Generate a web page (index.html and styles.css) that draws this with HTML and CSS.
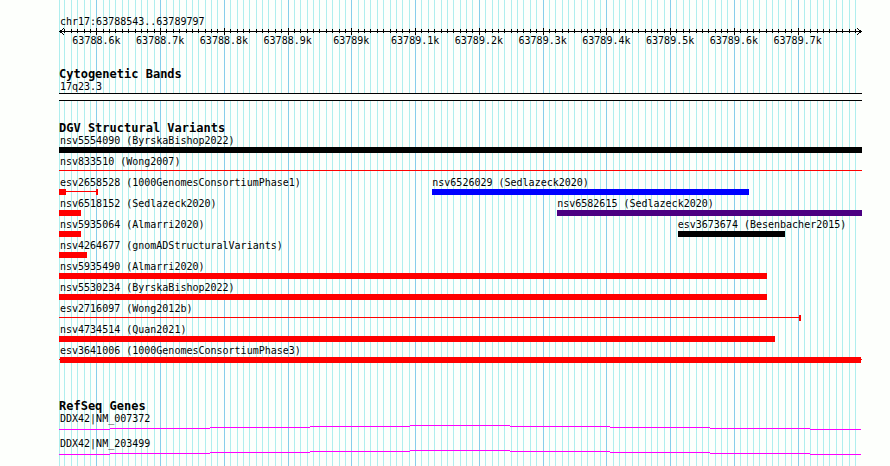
FILE: index.html
```html
<!DOCTYPE html>
<html lang="en">
<head>
  <meta charset="UTF-8">
  <meta name="viewport" content="width=device-width, initial-scale=1.0">
  <title>chr17:63788543..63789797</title>
  <link rel="stylesheet" href="styles.css">
</head>
<body>
  <main class="browser">
    <svg class="grid" id="grid" aria-hidden="true"></svg>

    <!-- Ruler -->
    <header class="ruler">
      <h1 class="region">chr17:63788543..63789797</h1>
      <svg class="axis" id="axis" aria-hidden="true"></svg>
      <div class="scale" id="scale"></div>
    </header>

    <!-- Cytogenetic bands -->
    <section class="track">
      <h2>Cytogenetic Bands</h2>
      <div class="label">17q23.3</div>
      <div class="band"></div>
    </section>

    <!-- Structural variants -->
    <section class="track variants">
      <h2>DGV Structural Variants</h2>
      <div id="variants"></div>
    </section>

    <!-- Genes -->
    <section class="track">
      <h2>RefSeq Genes</h2>
      <div class="gene">
        <div class="label">DDX42|NM_007372</div>
        <svg class="intron" viewBox="0 0 803 5" preserveAspectRatio="none">
          <path d="M0 4.5H51M51 3.5H151M151 2.5H251M251 1.5H351M351 .5H451M451 1.5H551M551 2.5H651M651 3.5H751M751 4.5H802"/>
        </svg>
      </div>
      <div class="gene">
        <div class="label">DDX42|NM_203499</div>
        <svg class="intron" viewBox="0 0 803 5" preserveAspectRatio="none">
          <path d="M0 4.5H51M51 3.5H151M151 2.5H251M251 1.5H351M351 .5H451M451 1.5H551M551 2.5H651M651 3.5H751M751 4.5H802"/>
        </svg>
      </div>
    </section>
  </main>

  <script src="script.js"></script>
</body>
</html>
```

FILE: styles.css
```css
/* ====== Base layout ====== */
body{background:#fdfffc;color:#000;font-family:"DejaVu Sans Mono","Liberation Mono",monospace;font-size:10px;line-height:12px;margin:0}
.browser{position:relative;display:flex;flex-direction:column;gap:20px;box-sizing:border-box;min-height:100vh;margin:0 28px 0 59px;padding-top:16px}
.browser svg{display:block;width:100%;shape-rendering:crispEdges}

/* ====== Grid behind all tracks ====== */
.browser .grid{position:absolute;top:0;left:0;height:100%;z-index:-1}
.minor{fill:#afeeee}
.major{fill:#87ceeb}

/* ====== Ruler ====== */
.region{margin:0;padding-left:1px;font-size:10px;font-weight:normal}
.ruler .axis{height:7px;overflow:visible}
.arrow{fill:none;stroke:#000}
.scale{display:grid;height:12px}
.scale span{grid-area:1/1;justify-self:start;width:48px;margin-right:-48px;text-align:center;transform:translateX(-50%)}

/* ====== Tracks ====== */
.track h2{margin:0;font-size:12px;line-height:14px}
.variants{padding-bottom:13px}
.label{padding-left:1px;white-space:nowrap}
.band{height:6px;border-top:1px solid #000;border-bottom:1px solid #000;background:#fdfffc}

.row{margin-bottom:3px}
.names{display:grid}
.names .label{grid-area:1/1}
.names .label + .label{padding-left:0}
.row .bars{height:6px}

.gene{padding-bottom:8px}
.browser .intron{height:5px}
.intron path{fill:none;stroke:#f0f}
```

FILE: script.js
```js
/* Region shown, with a small margin on both sides */
const VIEW_START = 63788541.4;
const VIEW_SPAN = 1259.7;
const BASE = 63788000;

const pct = bp => (bp - VIEW_START) / VIEW_SPAN * 100 + '%';
const width = (a, b) => (b - a) / VIEW_SPAN * 100 + '%';

/* from/to and blocks are offsets from BASE, LEFT and RIGHT are the edges of the view */
const LEFT = 541.4, RIGHT = 1801.1;
const rows = [
  [{name: 'nsv5554090 (ByrskaBishop2022)', color: '#000', from: LEFT, to: RIGHT}],
  [{name: 'nsv833510 (Wong2007)', color: 'red', from: LEFT, to: RIGHT, blocks: []}],
  [
    {name: 'esv2658528 (1000GenomesConsortiumPhase1)', color: 'red', from: LEFT, to: 603, blocks: [[LEFT, 552], [600, 603]]},
    {name: 'nsv6526029 (Sedlazeck2020)', color: 'blue', from: 1127, to: 1624}
  ],
  [
    {name: 'nsv6518152 (Sedlazeck2020)', color: 'red', from: LEFT, to: 576},
    {name: 'nsv6582615 (Sedlazeck2020)', color: 'indigo', from: 1323, to: RIGHT}
  ],
  [
    {name: 'nsv5935064 (Almarri2020)', color: 'red', from: LEFT, to: 576},
    {name: 'esv3673674 (Besenbacher2015)', color: '#000', from: 1512, to: 1680}
  ],
  [{name: 'nsv4264677 (gnomADStructuralVariants)', color: 'red', from: LEFT, to: 585}],
  [{name: 'nsv5935490 (Almarri2020)', color: 'red', from: LEFT, to: 1652}],
  [{name: 'nsv5530234 (ByrskaBishop2022)', color: 'red', from: LEFT, to: 1652}],
  [{name: 'esv2716097 (Wong2012b)', color: 'red', from: LEFT, to: 1705, blocks: [[1702, 1705]]}],
  [{name: 'nsv4734514 (Quan2021)', color: 'red', from: LEFT, to: 1665}],
  [{name: 'esv3641006 (1000GenomesConsortiumPhase3)', color: 'red', from: LEFT, to: RIGHT, blocks: [[543, 1800]]}]
];

/* Grid lines, ticks and scale labels */
let grid = '<rect class="minor" x="0" width="1" height="100%"/>';
let axis = `<rect x="1" y="3" width="${width(543, 1800)}" height="1"/>`;
let scale = '';
for (let bp = 63788550; bp <= 63789790; bp += 10) {
  const major = bp % 100 === 0;
  grid += `<rect class="${major ? 'major' : 'minor'}" x="${pct(bp)}" width="1" height="100%"/>`;
  axis += `<rect x="${pct(bp)}" y="${major ? 0 : 1}" width="1" height="${major ? 7 : 4}"/>`;
  if (major) scale += `<span style="margin-left:${pct(bp)}">${bp / 1000}k</span>`;
}
axis += '<path class="arrow" d="M5 0L1 3.5L5 7"/>';
axis += '<svg x="100%" overflow="visible"><path class="arrow" d="M-5 0L-1 3.5L-5 7"/></svg>';
document.getElementById('grid').innerHTML = grid;
document.getElementById('axis').innerHTML = axis;
document.getElementById('scale').innerHTML = scale;

/* Variant rows */
function drawBars(f) {
  const blocks = f.blocks || [[f.from, f.to]];
  let out = `<rect x="${pct(BASE + f.from)}" y="2" width="${width(f.from, f.to)}" height="1" fill="${f.color}"/>`;
  blocks.forEach(([a, b]) => {
    out += `<rect x="${pct(BASE + a)}" width="${width(a, b)}" height="6" fill="${f.color}"/>`;
  });
  return out;
}

document.getElementById('variants').innerHTML = rows.map(row => `
  <div class="row">
    <div class="names">${row.map(f => `<div class="label" style="margin-left:${pct(BASE + f.from)}">${f.name}</div>`).join('')}</div>
    <svg class="bars">${row.map(drawBars).join('')}</svg>
  </div>`).join('');
```
